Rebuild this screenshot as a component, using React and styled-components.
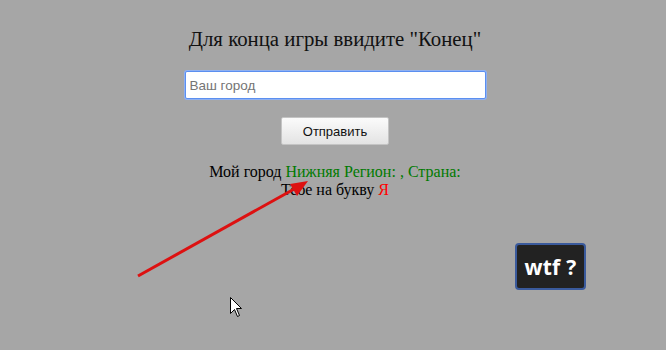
import styled, { createGlobalStyle } from 'styled-components';

const GlobalStyle = createGlobalStyle`
  html, body {
    margin: 0;
    padding: 0;
    background: #a6a6a6;
    font-family: 'Liberation Serif', 'Times New Roman', serif;
  }
`;

const Page = styled.div`
  position: relative;
  width: 666px;
  height: 350px;
  overflow: hidden;
  background: #a6a6a6;
`;

const Main = styled.div`
  display: flex;
  flex-direction: column;
  align-items: center;
  padding: 27px 0 0 4px;
`;

const Title = styled.h1`
  margin: 0;
  font-size: 20.8px;
  font-weight: normal;
  color: #111;
  line-height: 24px;
`;

const CityInput = styled.input`
  box-sizing: border-box;
  margin-top: 20px;
  width: 301px;
  height: 28px;
  padding: 0 4px;
  border: 1px solid #5b8ff0;
  border-radius: 2px;
  box-shadow: 0 0 0 1px #8fb0f0;
  outline: none;
  background: #fff;
  font-family: 'Liberation Sans', Arial, sans-serif;
  font-size: 13.5px;
  color: #222;

  &::placeholder {
    color: #757575;
  }
`;

const SendButton = styled.button`
  box-sizing: border-box;
  margin-top: 18px;
  width: 108px;
  height: 28px;
  border: 1px solid #c4c4c4;
  border-radius: 2px;
  background: linear-gradient(#fbfbfb, #e3e3e3);
  font-family: 'Liberation Sans', Arial, sans-serif;
  font-size: 13px;
  color: #111;
`;

const Info = styled.div`
  margin-top: 18px;
  font-size: 16px;
  line-height: 18px;
  color: #000;
  text-align: center;
`;

const Colored = styled.span`
  color: ${(p) => p.$color};
`;

const WtfButton = styled.button`
  position: absolute;
  left: 515px;
  top: 243px;
  box-sizing: border-box;
  width: 71px;
  height: 47px;
  border: 2px solid #3a5a9c;
  border-radius: 4px;
  background: #222;
  color: #fff;
  font-family: 'Open Sans', 'DejaVu Sans', sans-serif;
  font-weight: bold;
  font-size: 21px;
  letter-spacing: 0.3px;
  padding: 0;
`;

const Overlay = styled.svg`
  position: absolute;
  left: 0;
  top: 0;
  pointer-events: none;
`;

export default function App() {
  return (
    <Page>
      <GlobalStyle />
      <Main>
        <Title>Для конца игры ввидите "Конец"</Title>
        <CityInput placeholder="Ваш город" />
        <SendButton>Отправить</SendButton>
        <Info>
          Мой город <Colored $color="#007a00">Нижняя Регион: , Страна:</Colored>
          <br />
          Тебе на букву <Colored $color="#ff0000">Я</Colored>
        </Info>
      </Main>
      <WtfButton>wtf ?</WtfButton>
      <Overlay width="666" height="350">
        <line x1="138" y1="276" x2="296" y2="188" stroke="#dd1111" strokeWidth="3" />
        <polygon points="308,181 290,184 297,196" fill="#dd1111" />
        <path
          d="M230.5 297.5 L230.5 313.5 L234.5 309.5 L237.5 316.5 L239.5 315.5 L236.5 308.5 L241.5 308.5 Z"
          fill="#fff"
          stroke="#000"
          strokeWidth="1"
        />
      </Overlay>
    </Page>
  );
}
